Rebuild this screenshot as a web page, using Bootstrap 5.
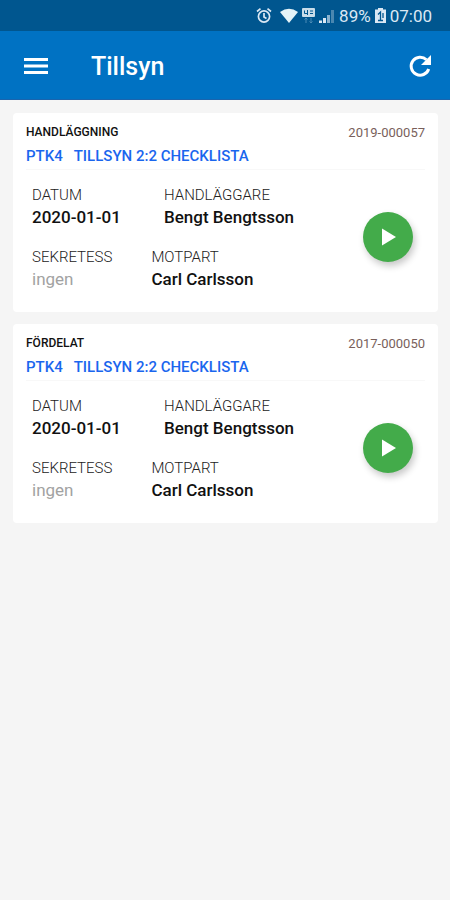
<!DOCTYPE html>
<html lang="sv">
<head>
<meta charset="utf-8">
<meta name="viewport" content="width=device-width, initial-scale=1">
<title>Tillsyn</title>
<link href="https://cdn.jsdelivr.net/npm/bootstrap@5.3.0/dist/css/bootstrap.min.css" rel="stylesheet">
<style>
body { background: #f5f5f5; font-family: Roboto, "Liberation Sans", sans-serif; color: #111; }
.status-strip { background: #00568f; height: 31px; padding-right: 18px; color: #dbe8f4; font-size: 17px; line-height: 20px; }
.app-bar { background: #0072c3; height: 69px; padding: 2px 18px 0 22px; border-bottom: 1px solid #1a64ad; }
.app-bar .btn { color: #fff; border: 0; }
.app-title { font-size: 25px; line-height: 32px; font-weight: 500; color: #fff; margin-left: 42px; padding-top: 2px; }
.case-list { padding: 13px 12px 12px 13px; gap: 12px; }
.case-card { border: 0; border-radius: 4px; color: inherit; }
.case-head { margin: 0 13px; padding-top: 8px; border-bottom: 1px solid #f8f8f8; }
.case-state { font-size: 12px; line-height: 23px; font-weight: 500; }
.case-id { font-size: 13px; line-height: 23px; color: #795f5b; }
.case-link { font-size: 15px; line-height: 25px; font-weight: 500; color: #1a66ee; gap: 11px; }
.case-body { padding: 14px 25px 22px 19px; }
.fields { gap: 18px; }
.field-row { gap: 39px; }
.date-field { min-width: 93px; }
.field-row dt { font-size: 15px; line-height: 22px; font-weight: 300; color: #222; }
.field-row dd { font-size: 17px; line-height: 22px; font-weight: 500; }
.field-row .none { font-weight: 400; color: #a2a2a2; }
.play-btn { width: 50px; height: 50px; background: #43ab4a; border: 0; box-shadow: 2px 4px 7px rgba(0,0,0,.22); }
.play-btn:hover { background: #399b40; }
</style>
<script src="https://cdn.jsdelivr.net/npm/bootstrap@5.3.0/dist/js/bootstrap.bundle.min.js" defer></script>
</head>
<body>
<div class="status-strip d-flex align-items-center justify-content-end">
  <svg class="me-2" width="16" height="18" viewBox="0 0 16 18" fill="none" stroke="currentColor" stroke-width="1.7" aria-hidden="true"><circle cx="8" cy="9.5" r="5.6"/><path d="M8 6v4l2.5 1.5M1 4.5 4.5 1.7M15 4.5l-3.500-2.800"/></svg>
  <svg class="me-1" width="18" height="16" viewBox="0 0 18 16" fill="#e4f3f8" aria-hidden="true"><path d="M0 4Q9-2.500 18 4L9 15Z"/></svg>
  <svg class="me-1" width="13" height="18" viewBox="0 0 13 18" aria-hidden="true"><rect width="13" height="9" y="1" rx="1" fill="#c9dce9"/><path d="M2.500 3.500v3h3M5.500 3v5M8 4h3M8 6.500h3" stroke="#00568f" fill="none"/><path d="M4 11v5M9 11v5M2.500 12.500 4 11l1.500 1.500M7.500 14.500 9 16l1.500-1.500" stroke="#4a8ab5" fill="none"/></svg>
  <svg class="me-1" width="16" height="16" viewBox="0 0 16 16" aria-hidden="true"><path fill="#dbe8f4" d="M0 15v-2.500h3V15zM4 15v-5h3v5z"/><path fill="#8ab2cf" d="M8 15V7h3v8z"/><path fill="#4a87b0" d="M12 15V2h3v13z"/></svg>
  <span>89%</span>
  <svg class="ms-1 me-1" width="11" height="16" viewBox="0 0 11 16" aria-hidden="true"><path fill="#dbe8f4" d="M3 0h5v1.500h3V15H0V1.500h3z"/><path d="M3 6.500 5.500 4v9M3 12.500h5M8 5v5" stroke="#00568f" stroke-width="1.300" fill="none"/></svg>
  <span>07:00</span>
</div>

<header class="app-bar d-flex align-items-center">
  <button class="btn p-0 d-flex" type="button" aria-label="Meny"><svg width="27" height="20" viewBox="0 0 27 20" fill="currentColor" aria-hidden="true"><path d="M2 2h24v3H2zM2 8.500h24v3H2zM2 15h24v3H2z"/></svg></button>
  <h1 class="app-title mb-0">Tillsyn</h1>
  <button class="btn p-0 d-flex ms-auto" type="button" aria-label="Uppdatera"><svg width="24" height="24" viewBox="0 0 24 24" aria-hidden="true"><path d="M18.500 5.800A9 9 0 1 0 20.700 15" fill="none" stroke="currentColor" stroke-width="3"/><path fill="currentColor" d="M23 1v10H13z"/></svg></button>
</header>

<main class="case-list d-flex flex-column">
  <article class="card case-card">
    <div class="case-head">
      <div class="d-flex justify-content-between"><span class="case-state">HANDLÄGGNING</span><span class="case-id">2019-000057</span></div>
      <a class="case-link d-flex text-decoration-none" href="#"><span>PTK4</span><span>TILLSYN 2:2 CHECKLISTA</span></a>
    </div>
    <div class="case-body d-flex align-items-center justify-content-between">
      <div class="fields d-flex flex-column">
        <dl class="field-row d-flex mb-0"><div class="date-field"><dt>DATUM</dt><dd class="mb-0">2020-01-01</dd></div><div><dt>HANDLÄGGARE</dt><dd class="mb-0">Bengt Bengtsson</dd></div></dl>
        <dl class="field-row d-flex mb-0"><div><dt>SEKRETESS</dt><dd class="mb-0 none">ingen</dd></div><div><dt>MOTPART</dt><dd class="mb-0">Carl Carlsson</dd></div></dl>
      </div>
      <button class="btn play-btn rounded-circle p-0 d-flex align-items-center justify-content-center" type="button" aria-label="Starta 2019-000057"><svg width="20" height="20" viewBox="0 0 20 20" aria-hidden="true"><path fill="#fff" d="M4 1.500v17l14-8.500z"/></svg></button>
    </div>
  </article>
  <article class="card case-card">
    <div class="case-head">
      <div class="d-flex justify-content-between"><span class="case-state">FÖRDELAT</span><span class="case-id">2017-000050</span></div>
      <a class="case-link d-flex text-decoration-none" href="#"><span>PTK4</span><span>TILLSYN 2:2 CHECKLISTA</span></a>
    </div>
    <div class="case-body d-flex align-items-center justify-content-between">
      <div class="fields d-flex flex-column">
        <dl class="field-row d-flex mb-0"><div class="date-field"><dt>DATUM</dt><dd class="mb-0">2020-01-01</dd></div><div><dt>HANDLÄGGARE</dt><dd class="mb-0">Bengt Bengtsson</dd></div></dl>
        <dl class="field-row d-flex mb-0"><div><dt>SEKRETESS</dt><dd class="mb-0 none">ingen</dd></div><div><dt>MOTPART</dt><dd class="mb-0">Carl Carlsson</dd></div></dl>
      </div>
      <button class="btn play-btn rounded-circle p-0 d-flex align-items-center justify-content-center" type="button" aria-label="Starta 2017-000050"><svg width="20" height="20" viewBox="0 0 20 20" aria-hidden="true"><path fill="#fff" d="M4 1.500v17l14-8.500z"/></svg></button>
    </div>
  </article>
</main>
</body>
</html>
